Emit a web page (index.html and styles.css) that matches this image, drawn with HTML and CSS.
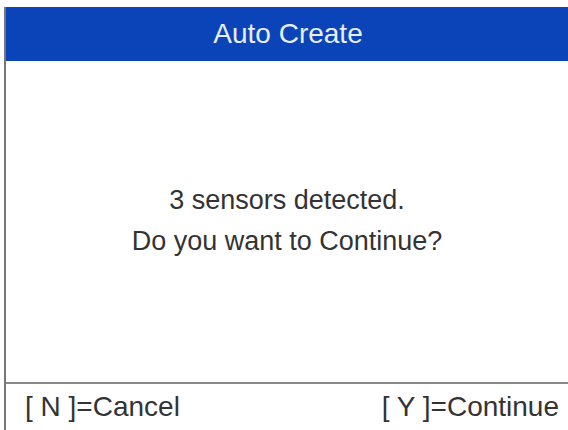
FILE: index.html
```html
<!DOCTYPE html>
<html lang="en">
<head>
    <meta charset="UTF-8">
    <title>Auto Create</title>
    <link rel="stylesheet" href="styles.css">
</head>
<body>
    <div class="screen">
        <div class="title-bar">Auto Create</div>
        <div class="message">
            <p>3 sensors detected.</p>
            <p>Do you want to Continue?</p>
        </div>
        <div class="footer">
            <span>[ N ]=Cancel</span>
            <span>[ Y ]=Continue</span>
        </div>
    </div>
</body>
</html>
```

FILE: styles.css
```css
body { margin: 0; background: #fff; font-family: "Liberation Sans", Arial, sans-serif; }
.screen { margin: 7px 0 0 4px; height: 423px; border-left: 2px solid #777; display: flex; flex-direction: column; }
.title-bar { height: 54px; background: #0a44b8; color: #e6eef8; font-size: 28px; display: flex; align-items: center; justify-content: center; padding-left: 2px; }
.message { flex: 1; display: flex; flex-direction: column; align-items: center; justify-content: center; color: #333; font-size: 27px; padding-bottom: 2px; }
.message p { margin: 0; line-height: 41px; }
.footer { border-top: 2px solid #888; height: 46px; display: flex; justify-content: space-between; align-items: center; padding: 0 9px 0 19px; color: #333; font-size: 28px; }
```
